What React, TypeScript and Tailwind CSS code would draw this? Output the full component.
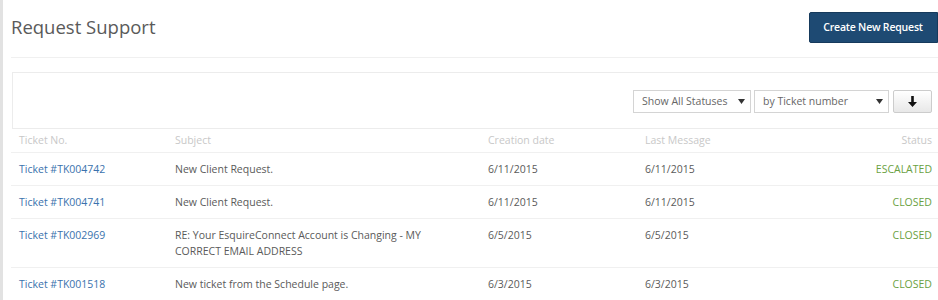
import React from "react";

const tickets = [
  { id: "Ticket #TK004742", subject: "New Client Request.", created: "6/11/2015", last: "6/11/2015", status: "ESCALATED" },
  { id: "Ticket #TK004741", subject: "New Client Request.", created: "6/11/2015", last: "6/11/2015", status: "CLOSED" },
  { id: "Ticket #TK002969", subject: "RE: Your EsquireConnect Account is Changing - MY CORRECT EMAIL ADDRESS", created: "6/5/2015", last: "6/5/2015", status: "CLOSED" },
  { id: "Ticket #TK001518", subject: "New ticket from the Schedule page.", created: "6/3/2015", last: "6/3/2015", status: "CLOSED" },
];

const Caret = () => (
  <svg width="7" height="5" viewBox="0 0 7 5" className="fill-[#333]">
    <path d="M0 0h7L3.5 5z" />
  </svg>
);

const App = () => {
  return (
    <div className="flex w-[938px] h-[300px] overflow-hidden bg-white font-['Open_Sans',sans-serif]">
      <div className="w-[3px] shrink-0 bg-[#e2e2e2]" />
      <div className="flex-1 min-w-0 pl-[8px] flex flex-col">
        <div className="flex items-center justify-between h-[58px] shrink-0 border-b border-[#f0f0f0]">
          <h1 className="text-[18.5px] text-[#5a5a5a] leading-none pb-[2px]">Request Support</h1>
          <button className="h-[31px] w-[129px] -mt-[2px] pr-[4px] text-right rounded-l-[2px] bg-[#1e4a73] border border-[#163a5c] text-white text-[10.5px] font-semibold tracking-[-0.2px]">
            <span className="inline-block w-[120px] text-center">Create New Request</span>
          </button>
        </div>
        <div className="mt-[14px] ml-[1px] h-[57px] shrink-0 border-t border-l border-b border-[#ececec] flex items-center justify-end pr-[6px] pt-[2px]">
          <div className="flex items-center gap-[3px]">
            <div className="w-[118px] h-[23px] border border-[#d4d4d4] bg-white flex items-center justify-between pl-[8px] pr-[5px] text-[10.5px] text-[#666]">
              <span>Show All Statuses</span>
              <Caret />
            </div>
            <div className="w-[135px] h-[23px] border border-[#d4d4d4] bg-white flex items-center justify-between pl-[8px] pr-[5px] text-[10.5px] text-[#666]">
              <span>by Ticket number</span>
              <Caret />
            </div>
            <button className="ml-[1px] w-[39px] h-[23px] border border-[#ccc] rounded-[2px] bg-gradient-to-b from-white to-[#e8e8e8] flex items-center justify-center">
              <svg width="9" height="11" viewBox="0 0 9 11" className="fill-[#111]">
                <path d="M3.2 0h2.6v6H9L4.5 11 0 6h3.2z" />
              </svg>
            </button>
          </div>
        </div>
        <div className="text-[10.5px]">
          <div className="grid grid-cols-[156px_313px_157px_1fr_auto] pl-[8px] pr-[6px] h-[24px] items-center border-b border-[#f0f0f0] text-[#c8c8c8]">
            <span>Ticket No.</span>
            <span>Subject</span>
            <span>Creation date</span>
            <span>Last Message</span>
            <span>Status</span>
          </div>
          {tickets.map((t) => (
            <div key={t.id} className="grid grid-cols-[156px_313px_157px_1fr_auto] pl-[8px] pr-[6px] py-[8px] leading-[16px] border-b border-[#f0f0f0] text-[#5a5a5a]">
              <a className="text-[#3a72ad]">{t.id}</a>
              <span className="pr-[40px]">{t.subject}</span>
              <span>{t.created}</span>
              <span>{t.last}</span>
              <span className="text-right text-[#6aa142]">{t.status}</span>
            </div>
          ))}
        </div>
      </div>
    </div>
  );
};

export default App;
